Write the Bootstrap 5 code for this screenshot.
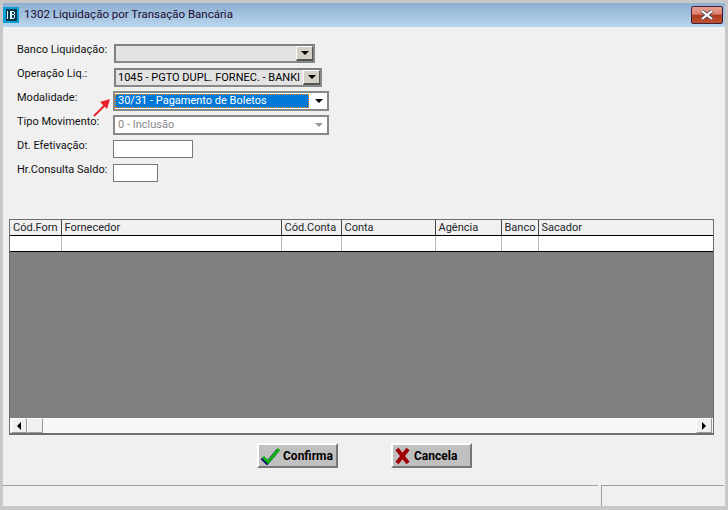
<!DOCTYPE html>
<html lang="pt-BR">
<head>
  <meta charset="UTF-8" />
  <title>1302 Liquidação por Transação Bancária</title>
  <link href="https://cdn.jsdelivr.net/npm/bootstrap@5.3.0/dist/css/bootstrap.min.css" rel="stylesheet" />
  <style>
    body { background: #f0f0f0; font-family: Roboto, "Liberation Sans", sans-serif; font-size: 11px; color: #000; overflow: hidden; }
    .app-window { width: 728px; height: 510px; background: #f0f0f0; border-style: solid; border-color: #c8c8c8; border-width: 3px 3px 4px 3px; position: relative; }
    .title-bar { height: 24px; background: linear-gradient(#8dafd0, #bad5ed); padding-right: 2px; }
    .title-text { font-size: 11.5px; color: #1a0a30; margin-left: 5px; }
    .close-btn { width: 32px; height: 18px; border: 1px solid #40203a; border-radius: 2px; background: linear-gradient(#e8a090 0, #d98070 45%, #b23a20 50%, #c05030 100%); }
    .form-area { padding: 14px 0 0 14px; height: 192px; }
    .form-line { height: 24px; }
    .field-label { width: 96px; padding-bottom: 6px; font-size: 11px; white-space: nowrap; color: #111; }
    .combo-box { height: 20px; border: 2px solid #888; display: flex; align-items: stretch; background: #fff; font-size: 11px; overflow: hidden; }
    .combo-box.is-grey { background: #e3e3e3; border-top-color: #808080; border-left-color: #808080; }
    .w-banco { width: 201px; height: 19px; margin-left: 1px; }
    .w-operacao { width: 208px; height: 19px; margin-left: 1px; }
    .w-modalidade { width: 216px; }
    .w-tipo { width: 216px; }
    .combo-text { flex: 1; padding-left: 2px; line-height: 15px; white-space: nowrap; overflow: hidden; }
    .combo-text.is-selected { background: #0078d7; color: #fff; outline: 1px dotted #f80; outline-offset: -1px; margin: 1px 1px 1px 0; line-height: 14px; padding-left: 3px; }
    .combo-text.is-off { color: #888; padding-left: 3px; line-height: 16px; }
    .drop-btn { width: 17px; background: #fff; display: flex; align-items: center; justify-content: center; }
    .drop-btn.is-raised { background: #d4d0c8; border-style: solid; border-width: 1px 1px 2px 1px; border-color: #fff #555 #555 #fff; }
    .drop-arrow { width: 0; height: 0; border-style: solid; border-width: 4px 4px 0 4px; border-color: #000 transparent transparent transparent; }
    .drop-arrow.is-off { border-top-color: #999; }
    .plain-input { height: 18px; margin-bottom: 1px; border: 1px solid #777; background: #fff; }
    .w-data { width: 80px; }
    .w-hora { width: 45px; }
    .red-arrow { position: absolute; left: 89px; top: 94px; }
    .data-grid { width: 705px; height: 216px; margin-left: 6px; border: 1px solid #6e6e6e; border-width: 1px 1px 2px 1px; background: #808080; display: flex; flex-direction: column; }
    .grid-table { table-layout: fixed; width: 703px; margin: 0; --bs-table-bg: transparent; border-collapse: collapse; }
    .grid-table th, .grid-table td { padding: 0 0 0 3px; font-weight: 400; font-size: 11px; border: 0; white-space: nowrap; overflow: hidden; }
    .grid-table th { height: 15px; line-height: 14px; background: #f0f0f0; border-bottom: 1px solid #000; border-right: 1px solid #444; }
    .grid-table td { height: 16px; background: #fff; border-bottom: 1px solid #000; border-right: 1px solid #bbb; }
    .grid-table th:last-child, .grid-table td:last-child { border-right: 0; }
    .grid-fill { flex: 1; }
    .scroll-strip { height: 15px; background: repeating-conic-gradient(#fff 0 25%, #f0f0f0 0 50%) 0 0 / 2px 2px; padding: 0 1px; }
    .scroll-btn { width: 16px; height: 15px; background: #f0f0f0; border: 1px solid; border-color: #fff #999 #999 #fff; display: flex; align-items: center; justify-content: center; }
    .arrow-left { width: 0; height: 0; border-style: solid; border-width: 4px 4px 4px 0; border-color: transparent #000 transparent transparent; }
    .arrow-right { width: 0; height: 0; border-style: solid; border-width: 4px 0 4px 4px; border-color: transparent transparent transparent #000; }
    .action-row { padding-top: 8px; height: 50px; padding-left: 254px; gap: 53px; }
    .action-btn { width: 81px; height: 25px; background: #c0c0c0; border: 2px solid; border-color: #fff #777 #777 #fff; border-radius: 0; padding: 0 0 0 2px; font-weight: 700; font-size: 12px; color: #000; gap: 4px; }
    .action-btn:hover { background: #c0c0c0; }
    .icon-tight { margin-right: -2px; }
    .status-bar { height: 21px; gap: 3px; padding-right: 1px; }
    .status-left { width: 595px; border-top: 1px solid #a0a0a0; }
    .status-right { width: 123px; border-top: 1px solid #a0a0a0; border-left: 1px solid #a0a0a0; }
  </style>
</head>
<body>
  <div class="app-window d-flex flex-column">
    <div class="title-bar d-flex align-items-center">
      <svg width="16" height="16" viewBox="0 0 16 16">
        <rect width="16" height="16" fill="#0a9fd8"/>
        <rect x="3" y="2" width="11" height="12" fill="#10384c"/>
        <rect x="4" y="4" width="1" height="8" fill="#dff"/>
        <rect x="7" y="4" width="2" height="8" fill="#dff"/>
        <rect x="9" y="4" width="2" height="1" fill="#dff"/>
        <rect x="9" y="7" width="2" height="1" fill="#dff"/>
        <rect x="9" y="11" width="2" height="1" fill="#dff"/>
        <rect x="11" y="5" width="1" height="2" fill="#dff"/>
        <rect x="11" y="8" width="1" height="3" fill="#dff"/>
      </svg>
      <span class="title-text flex-grow-1">1302 Liquidação por Transação Bancária</span>
      <div class="close-btn d-flex align-items-center justify-content-center">
        <svg width="14" height="10" viewBox="0 0 14 10">
          <path d="M2 1 L12 9 M12 1 L2 9" stroke="#4a4a60" stroke-width="3.6"/>
          <path d="M2 1 L12 9 M12 1 L2 9" stroke="#fff" stroke-width="2.2"/>
        </svg>
      </div>
    </div>

    <div class="form-area">
      <div class="form-line d-flex align-items-center">
        <div class="field-label">Banco Liquidação:</div>
        <div class="combo-box is-grey w-banco"><div class="combo-text"></div><div class="drop-btn is-raised"><span class="drop-arrow"></span></div></div>
      </div>
      <div class="form-line d-flex align-items-center">
        <div class="field-label">Operação Liq.:</div>
        <div class="combo-box is-grey w-operacao"><div class="combo-text">1045 - PGTO DUPL. FORNEC. - BANKI</div><div class="drop-btn is-raised"><span class="drop-arrow"></span></div></div>
      </div>
      <div class="form-line d-flex align-items-center">
        <div class="field-label">Modalidade:</div>
        <div class="combo-box w-modalidade"><div class="combo-text is-selected">30/31 - Pagamento de Boletos</div><div class="drop-btn"><span class="drop-arrow"></span></div></div>
      </div>
      <div class="form-line d-flex align-items-center">
        <div class="field-label">Tipo Movimento:</div>
        <div class="combo-box w-tipo"><div class="combo-text is-off">0 - Inclusão</div><div class="drop-btn"><span class="drop-arrow is-off"></span></div></div>
      </div>
      <div class="form-line d-flex align-items-center">
        <div class="field-label">Dt. Efetivação:</div>
        <div class="plain-input w-data"></div>
      </div>
      <div class="form-line d-flex align-items-center">
        <div class="field-label">Hr.Consulta Saldo:</div>
        <div class="plain-input w-hora"></div>
      </div>
    </div>

    <svg class="red-arrow" width="20" height="20" viewBox="0 0 20 20">
      <path d="M2 19 L15 6" stroke="#e8202c" stroke-width="2" fill="none"/>
      <path d="M18 2 L8 5 L15 12 Z" fill="#e8202c"/>
    </svg>

    <div class="data-grid">
      <table class="table grid-table">
        <colgroup>
          <col style="width:51px"><col style="width:220px"><col style="width:60px"><col style="width:94px"><col style="width:66px"><col style="width:37px"><col>
        </colgroup>
        <thead>
          <tr><th>Cód.Forn</th><th>Fornecedor</th><th>Cód.Conta</th><th>Conta</th><th>Agência</th><th>Banco</th><th>Sacador</th></tr>
        </thead>
        <tbody>
          <tr><td></td><td></td><td></td><td></td><td></td><td></td><td></td></tr>
        </tbody>
      </table>
      <div class="grid-fill"></div>
      <div class="scroll-strip d-flex justify-content-between">
        <div class="d-flex gap-0">
          <div class="scroll-btn"><span class="arrow-left"></span></div>
          <div class="scroll-btn"></div>
        </div>
        <div class="scroll-btn"><span class="arrow-right"></span></div>
      </div>
    </div>

    <div class="action-row d-flex">
      <button type="button" class="btn action-btn d-flex align-items-center">
        <svg class="icon-tight" width="20" height="18" viewBox="0 0 20 18">
          <path d="M2 10 L7 15 L18 2" fill="none" stroke="#000080" stroke-width="3.4" transform="translate(-1 1)"/>
          <path d="M2 10 L7 15 L18 2" fill="none" stroke="#10b010" stroke-width="3"/>
        </svg>
        <span>Confirma</span>
      </button>
      <button type="button" class="btn action-btn d-flex align-items-center">
        <svg width="15" height="18" viewBox="0 0 15 18">
          <path d="M2 2 L13 16 M13 2 L2 16" fill="none" stroke="#a00000" stroke-width="4"/>
        </svg>
        <span>Cancela</span>
      </button>
    </div>

    <div class="status-bar d-flex">
      <div class="status-left"></div>
      <div class="status-right"></div>
    </div>
  </div>
  <script src="https://cdn.jsdelivr.net/npm/bootstrap@5.3.0/dist/js/bootstrap.bundle.min.js"></script>
</body>
</html>
